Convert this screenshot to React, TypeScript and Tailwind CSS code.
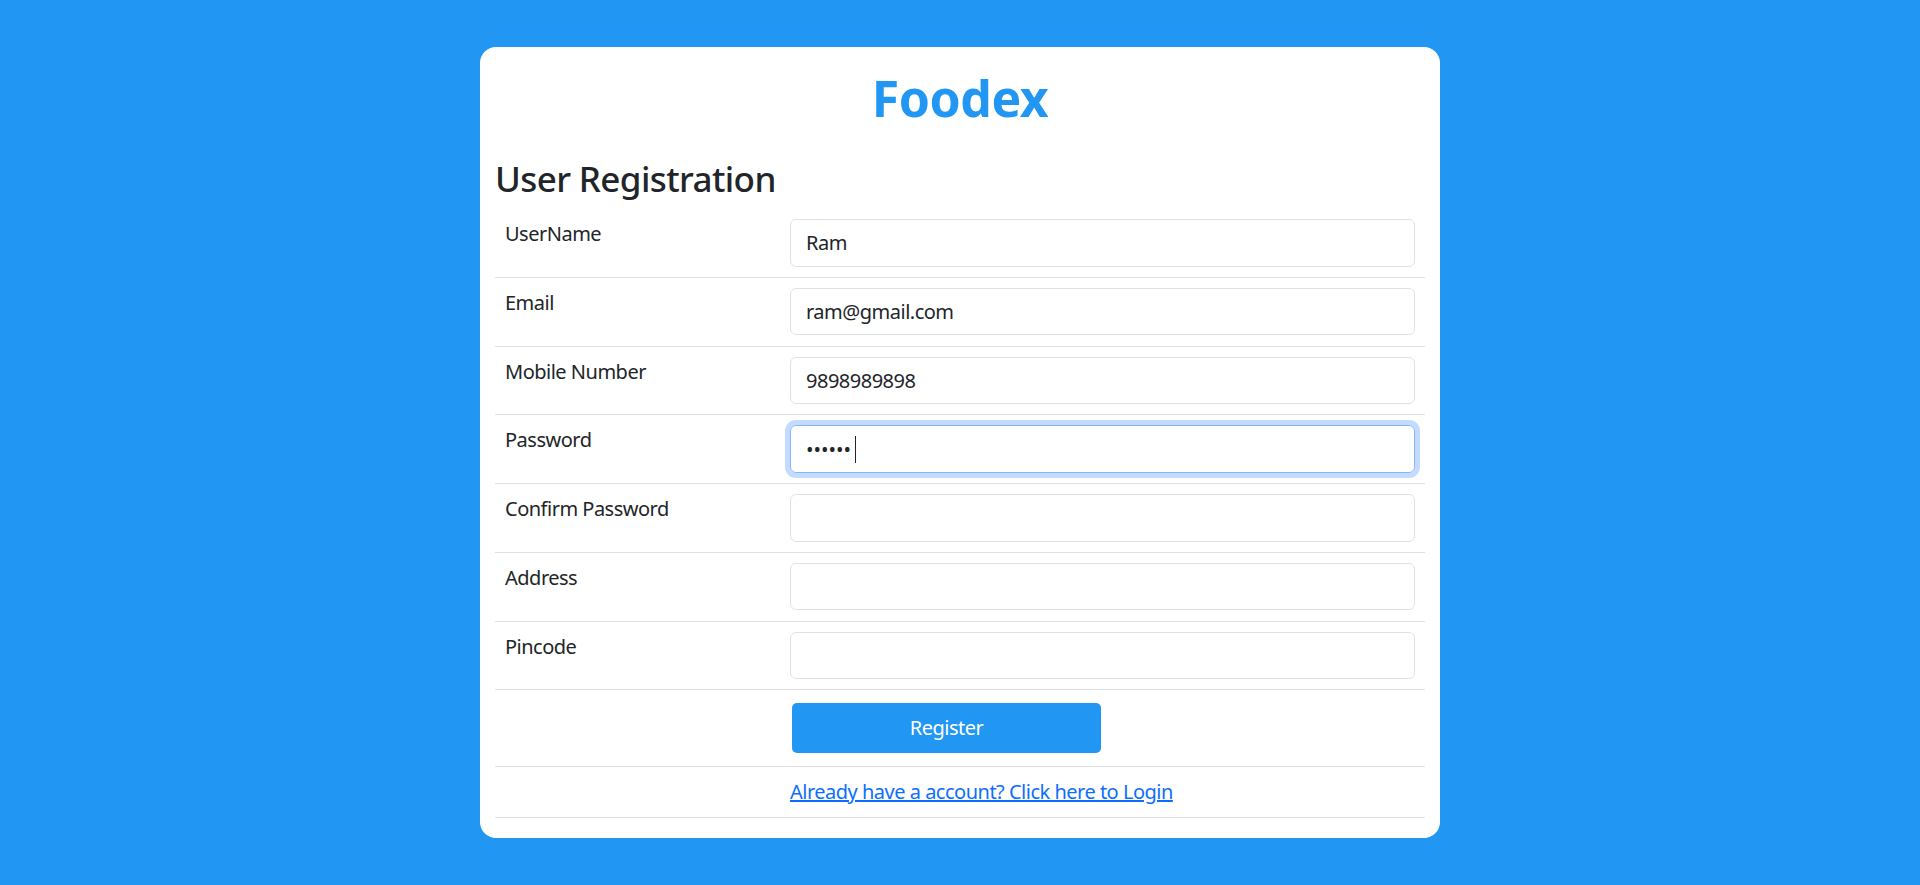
import React from "react";

const fields = [
  { label: "UserName", value: "Ram", type: "text" },
  { label: "Email", value: "ram@gmail.com", type: "text" },
  { label: "Mobile Number", value: "9898989898", type: "text" },
  { label: "Password", value: "123456", type: "password", focused: true },
  { label: "Confirm Password", value: "", type: "password" },
  { label: "Address", value: "", type: "text" },
  { label: "Pincode", value: "", type: "text" },
];

export default function App() {
  return (
    <div
      className="min-h-[885px] bg-[#2196F3] pt-[47px] text-[#212529]"
      style={{ fontFamily: '"Noto Sans", "Open Sans", sans-serif' }}
    >
      <div className="mx-auto w-[960px] rounded-[16px] bg-white px-[15px] pb-[20px]">
        <h1 className="pt-[21px] text-center text-[50px] font-bold leading-[1.2] tracking-[-0.5px] text-[#2196F3]">
          Foodex
        </h1>
        <h3 className="mt-[30px] text-[35px] font-medium leading-[1.2] tracking-[-0.6px]">
          User Registration
        </h3>

        <div className="mt-[9px] flex flex-col tracking-[-0.5px]">
          {fields.map((f) => (
            <div
              key={f.label}
              className="flex h-[68.75px] items-start border-b border-[#dee2e6] px-[10px] pt-[10px]"
            >
              <label className="w-[275px] shrink-0 text-[20px] leading-[1.5]">{f.label}</label>
              <div className="relative ml-[10px] flex-1">
                <input
                  type={f.type}
                  defaultValue={f.value}
                  className={
                    f.focused
                      ? "box-border h-[47.5px] w-full rounded-[6px] border border-[#86b7fe] px-[15px] text-[20px] tracking-normal text-[#212529] shadow-[0_0_0_5px_rgba(13,110,253,0.25)] outline-none"
                      : "box-border h-[47.5px] w-full rounded-[6px] border border-[#dee2e6] px-[15px] text-[20px] tracking-[-0.5px] text-[#212529] outline-none"
                  }
                />
                {f.focused && (
                  <span className="absolute left-[65px] top-[11px] h-[27px] w-[1px] bg-[#212529]" />
                )}
              </div>
            </div>
          ))}

          <div className="flex h-[77px] items-start border-b border-[#dee2e6] pt-[13px]">
            <div className="w-[297px] shrink-0" />
            <button className="h-[50px] w-[309px] rounded-[5px] bg-[#2196F3] text-[20px] text-white">
              Register
            </button>
          </div>

          <div className="flex h-[51px] items-center border-b border-[#dee2e6]">
            <div className="w-[295px] shrink-0" />
            <a href="#" className="text-[20px] text-[#0d6efd] underline">
              Already have a account? Click here to Login
            </a>
          </div>
        </div>
      </div>
    </div>
  );
}
